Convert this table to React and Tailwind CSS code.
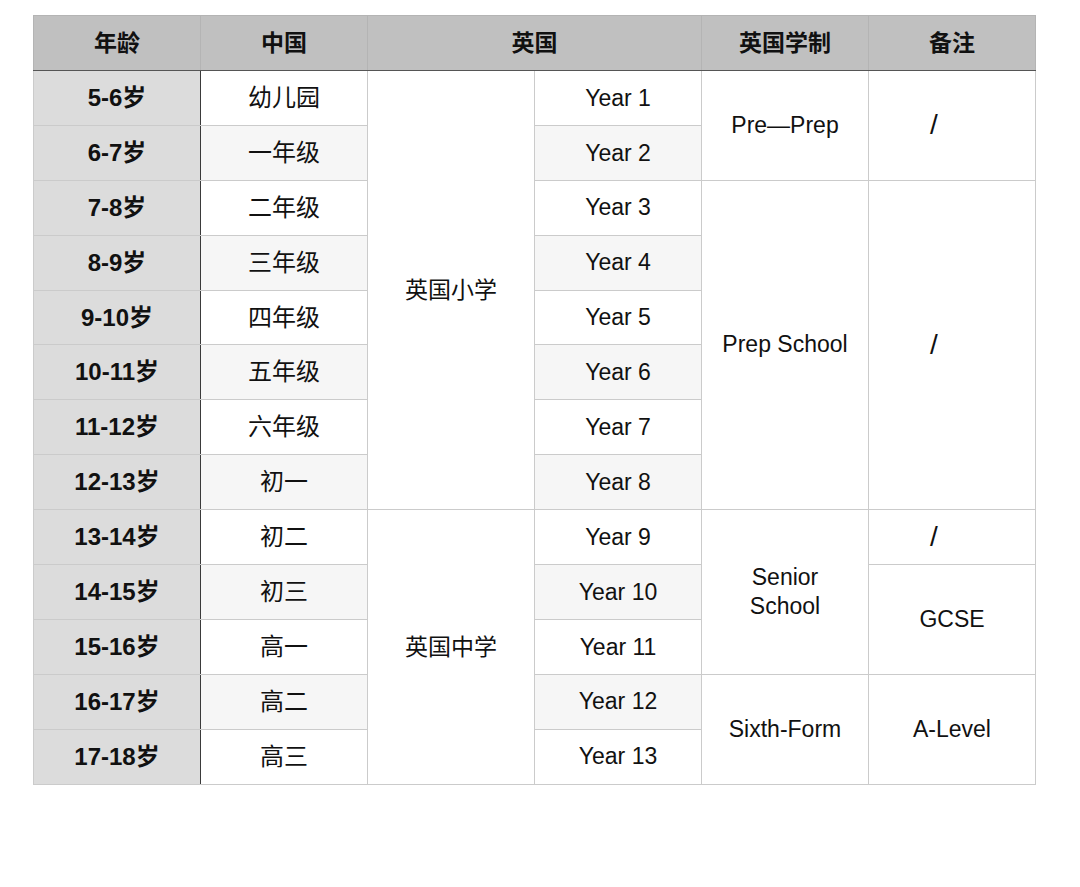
const rows = [
  { age: "5-6岁", cn: "幼儿园", year: "Year 1" },
  { age: "6-7岁", cn: "一年级", year: "Year 2" },
  { age: "7-8岁", cn: "二年级", year: "Year 3" },
  { age: "8-9岁", cn: "三年级", year: "Year 4" },
  { age: "9-10岁", cn: "四年级", year: "Year 5" },
  { age: "10-11岁", cn: "五年级", year: "Year 6" },
  { age: "11-12岁", cn: "六年级", year: "Year 7" },
  { age: "12-13岁", cn: "初一", year: "Year 8" },
  { age: "13-14岁", cn: "初二", year: "Year 9" },
  { age: "14-15岁", cn: "初三", year: "Year 10" },
  { age: "15-16岁", cn: "高一", year: "Year 11" },
  { age: "16-17岁", cn: "高二", year: "Year 12" },
  { age: "17-18岁", cn: "高三", year: "Year 13" },
];

// merged cells keyed by the row they start on
const uk = { 0: { text: "英国小学", span: 8 }, 8: { text: "英国中学", span: 5 } };
const system = {
  0: { text: "Pre—Prep", span: 2 },
  2: { text: "Prep School", span: 6 },
  8: { text: <>Senior<br />School</>, span: 3 },
  11: { text: "Sixth-Form", span: 2 },
};
const notes = {
  0: { text: "/", span: 2, slash: true },
  2: { text: "/", span: 6, slash: true },
  8: { text: "/", span: 1, slash: true },
  9: { text: "GCSE", span: 2 },
  11: { text: "A-Level", span: 2 },
};

const cell = "border border-[#cbcbcb] text-center align-middle text-[#111]";

export default function App() {
  return (
    <div
      className="w-[1080px] h-[887px] bg-white pt-[15px] pl-[33px]"
      style={{ fontFamily: '"Liberation Sans", "Noto Sans CJK SC", sans-serif' }}
    >
      <table className="border-collapse table-fixed w-[1002px]">
        <colgroup>
          <col className="w-[167px]" />
          <col className="w-[167px]" />
          <col className="w-[167px]" />
          <col className="w-[167px]" />
          <col className="w-[167px]" />
          <col className="w-[167px]" />
        </colgroup>
        <thead>
          <tr className="h-[55px] bg-[#c0c0c0] text-[23px] font-bold text-[#111]">
            <th className="border border-[#b4b4b4] border-b-[#555]">年龄</th>
            <th className="border border-[#b4b4b4] border-b-[#555]">中国</th>
            <th colSpan={2} className="border border-[#b4b4b4] border-b-[#555]">英国</th>
            <th className="border border-[#b4b4b4] border-b-[#555]">英国学制</th>
            <th className="border border-[#b4b4b4] border-b-[#555]">备注</th>
          </tr>
        </thead>
        <tbody>
          {rows.map((r, i) => {
            const zebra = i % 2 === 1 ? "bg-[#f6f6f6]" : "bg-white";
            return (
              <tr key={r.age} className="h-[54.9px]">
                <td className={`${cell} bg-[#dcdcdc] border-r-[#3a3a3a] font-bold text-[24px]`}>{r.age}</td>
                <td className={`${cell} ${zebra} text-[24px]`}>{r.cn}</td>
                {uk[i] && (
                  <td rowSpan={uk[i].span} className={`${cell} bg-white text-[23px]`}>{uk[i].text}</td>
                )}
                <td className={`${cell} ${zebra} text-[23px]`}>{r.year}</td>
                {system[i] && (
                  <td rowSpan={system[i].span} className={`${cell} bg-white text-[23px] leading-[29px]`}>
                    {system[i].text}
                  </td>
                )}
                {notes[i] && (
                  <td
                    rowSpan={notes[i].span}
                    className={`${cell} bg-white ${notes[i].slash ? "text-[28px] pr-[36px]" : "text-[23px]"}`}
                  >
                    {notes[i].text}
                  </td>
                )}
              </tr>
            );
          })}
        </tbody>
      </table>
    </div>
  );
}
